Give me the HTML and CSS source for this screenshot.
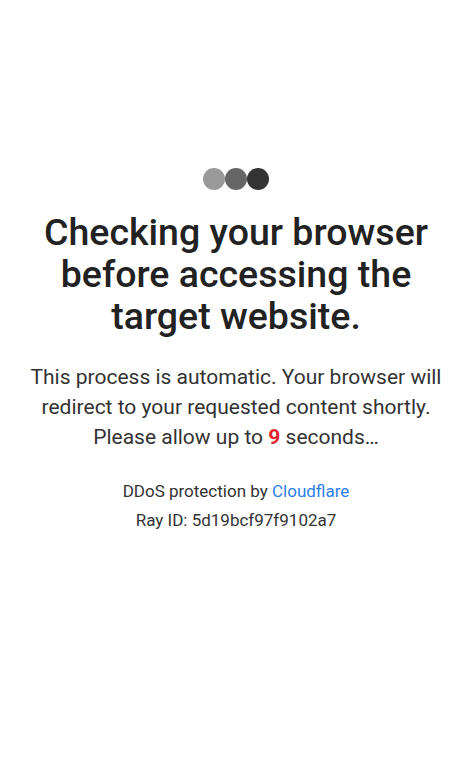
FILE: index.html
```html
<!DOCTYPE html>
<html>
<head>
<meta charset="utf-8">
<link rel="stylesheet" href="styles.css">
</head>
<body>
<main class="page">
  <div class="dots">
    <span class="dot d1"></span><span class="dot d2"></span><span class="dot d3"></span>
  </div>
  <h1 class="title">Checking your browser<br>before accessing the<br>target website.</h1>
  <p class="lead">This process is automatic. Your browser will<br>redirect to your requested content shortly.<br>Please allow up to <span class="count">9</span> seconds…</p>
  <div class="meta">
    <div>DDoS protection by <a class="link" href="#">Cloudflare</a></div>
    <div>Ray ID: 5d19bcf97f9102a7</div>
  </div>
</main>
</body>
</html>
```
FILE: styles.css
```css
html, body {
  margin: 0;
  padding: 0;
  background: #fff;
}
body {
  font-family: Roboto, "Liberation Sans", sans-serif;
  color: #2b2b2b;
}
.page {
  display: flex;
  flex-direction: column;
  align-items: center;
  text-align: center;
  padding: 168px 0 0 16px;
}
.dots {
  display: flex;
}
.dot {
  width: 22px;
  height: 22px;
  border-radius: 50%;
  display: block;
}
.d1 { background: #9a9a9a; }
.d2 { background: #666; }
.d3 { background: #333; }
.title {
  margin: 21px 0 0;
  font-size: 37.5px;
  font-weight: 500;
  line-height: 42px;
  color: #222;
  white-space: nowrap;
}
.lead {
  margin: 25px 0 0;
  font-size: 21px;
  line-height: 30px;
  color: #333;
  white-space: nowrap;
}
.count {
  color: #e0262e;
  font-weight: 700;
}
.meta {
  margin-top: 25px;
  font-size: 17px;
  line-height: 28.5px;
  color: #333;
}
.link {
  color: #2f80ed;
  text-decoration: none;
}
```
